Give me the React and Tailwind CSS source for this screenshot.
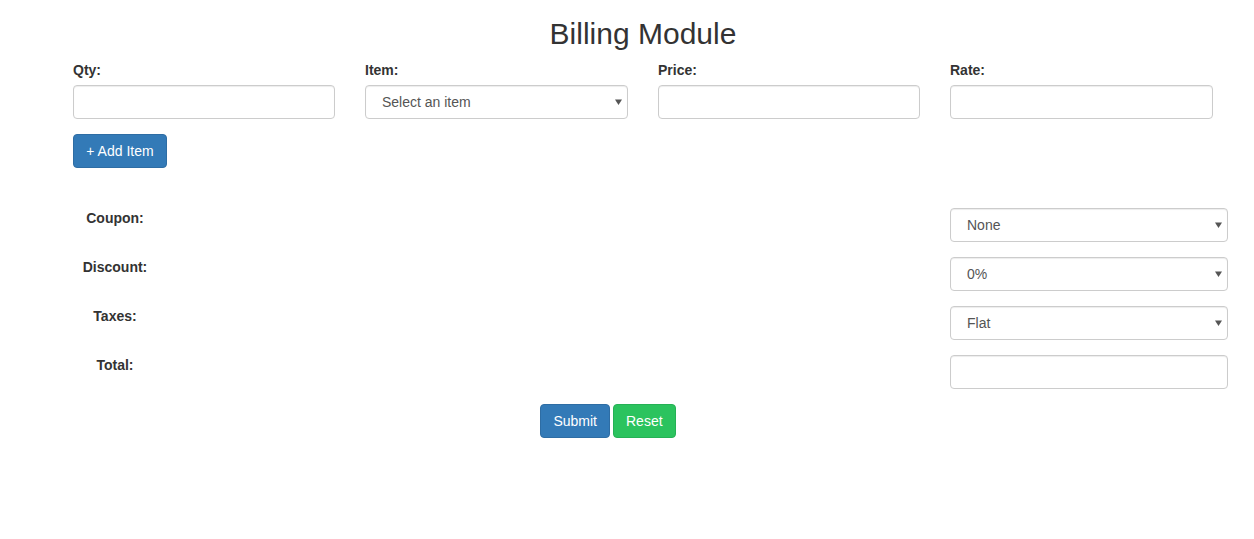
import React from "react";

function Caret() {
  return (
    <svg
      className="pointer-events-none absolute right-[6px] top-1/2 -translate-y-1/2"
      width="7"
      height="6"
      viewBox="0 0 7 6"
    >
      <path d="M0 0.5 H7 L3.5 6 Z" fill="#555" />
    </svg>
  );
}

function Select({ value, className = "" }) {
  return (
    <div className={"relative " + className}>
      <select
        defaultValue={value}
        className="h-[34px] w-full appearance-none rounded-[4px] border border-[#ccc] bg-white pl-[16px] pr-6 text-[14px] text-[#555] shadow-[inset_0_1px_1px_rgba(0,0,0,0.075)] outline-none"
      >
        <option>{value}</option>
      </select>
      <Caret />
    </div>
  );
}

function Input({ className = "" }) {
  return (
    <input
      className={
        "block h-[34px] w-full rounded-[4px] border border-[#ccc] bg-white px-3 text-[14px] text-[#555] shadow-[inset_0_1px_1px_rgba(0,0,0,0.075)] outline-none " +
        className
      }
    />
  );
}

function Field({ label, children }) {
  return (
    <div className="flex flex-col">
      <label className="mb-[5px] block h-[20px] text-[14px] font-bold leading-[20px] text-[#333]">
        {label}
      </label>
      {children}
    </div>
  );
}

function Row({ label, children }) {
  return (
    <div className="flex items-start justify-between">
      <div className="w-[84px] text-center text-[14px] font-bold leading-[20px] text-[#333]">
        {label}
      </div>
      <div className="w-[278px]">{children}</div>
    </div>
  );
}

export default function App() {
  return (
    <div
      className="min-h-[539px] w-full bg-white text-[14px] text-[#333]"
      style={{ fontFamily: '"Liberation Sans", Arial, Helvetica, sans-serif' }}
    >
      <div className="pl-[32px] pt-[17px]">
        <h1 className="text-center text-[30px] font-normal leading-[33px] text-[#333]">
          Billing Module
        </h1>
      </div>

      <div className="ml-[73px] mt-[10px] w-[1140px]">
        <div className="grid grid-cols-[262px_263px_262px_263px] gap-x-[30px]">
          <Field label="Qty:">
            <Input />
          </Field>
          <Field label="Item:">
            <Select value="Select an item" />
          </Field>
          <Field label="Price:">
            <Input />
          </Field>
          <Field label="Rate:">
            <Input />
          </Field>
        </div>

        <button className="mt-[15px] h-[34px] w-[94px] rounded-[4px] border border-[#2e6da4] bg-[#337ab7] text-[14px] text-white">
          + Add Item
        </button>
      </div>

      <div className="ml-[73px] mt-[40px] flex w-[1155px] flex-col gap-[15px]">
        <Row label="Coupon:">
          <Select value="None" />
        </Row>
        <Row label="Discount:">
          <Select value="0%" />
        </Row>
        <Row label="Taxes:">
          <Select value="Flat" />
        </Row>
        <Row label="Total:">
          <Input />
        </Row>
      </div>

      <div className="mt-[15px] flex justify-center gap-[3px] pr-[38px]">
        <button className="h-[34px] rounded-[4px] border border-[#2e6da4] bg-[#337ab7] px-[12px] text-[14px] text-white">
          Submit
        </button>
        <button className="h-[34px] rounded-[4px] border border-[#25b155] bg-[#2bc35e] px-[12px] text-[14px] text-white">
          Reset
        </button>
      </div>
    </div>
  );
}
